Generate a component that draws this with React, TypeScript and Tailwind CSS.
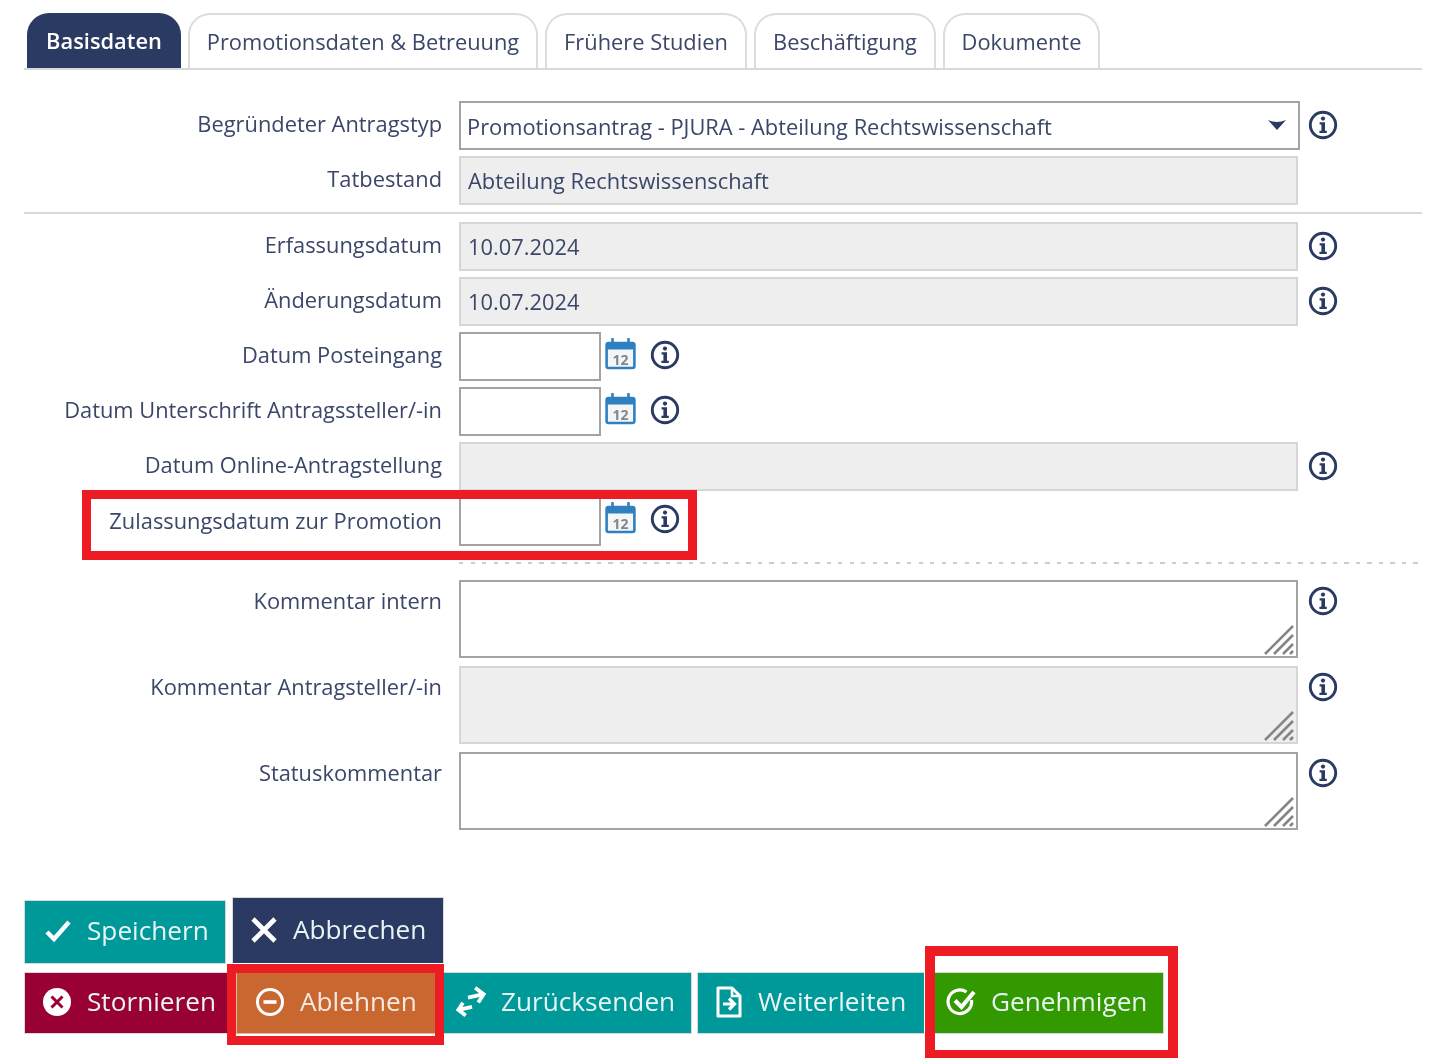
import React from "react";

const Info = ({ className = "" }: { className?: string }) => (
  <svg width="30" height="30" viewBox="0 0 30 30" className={"shrink-0 " + className}>
    <circle cx="15" cy="15" r="12.7" fill="none" stroke="#2b3a63" strokeWidth="2.9" />
    <circle cx="15" cy="8.6" r="2.1" fill="#2b3a63" />
    <path d="M11.6 12.2h5.4v8.6h1.8v2.2h-7.4v-2.2h2v-6.4h-1.8z" fill="#2b3a63" />
  </svg>
);

const Calendar = () => (
  <svg width="32" height="32" viewBox="0 0 32 32" className="shrink-0">
    <rect x="2.6" y="5" width="27.8" height="25" rx="2" fill="#f2f6f9" stroke="#2f80c0" strokeWidth="2.6" />
    <rect x="2.6" y="5" width="27.8" height="6.5" fill="#2f80c0" />
    <path d="M8.5 1v7M24.5 1v7" stroke="#2f80c0" strokeWidth="2.6" strokeLinecap="round" />
    <text x="16.5" y="26.5" textAnchor="middle" fontSize="14" fontWeight="700" fill="#858585" fontFamily="'Open Sans', sans-serif">12</text>
  </svg>
);

const Grip = () => (
  <svg width="32" height="32" viewBox="0 0 32 32" className="absolute right-[1px] bottom-[1px]">
    <path d="M2 31 30 3M11 31 30 12M20 31 30 21M27 31l3-3" stroke="#858585" strokeWidth="2.6" fill="none" />
  </svg>
);

const Label = ({ children, className = "" }: { children: React.ReactNode; className?: string }) => (
  <div className={"w-[418px] shrink-0 text-right text-[#3b4768] " + className}>{children}</div>
);

const disabled = "border-2 border-[#d6d6d6] bg-[#eeeeee]";
const active = "border-2 border-[#a3a3a3] bg-white";

const Field = ({ label, value, mt, info = true }: { label: string; value?: string; mt: string; info?: boolean }) => (
  <div className={"flex h-[49px] items-center " + mt}>
    <Label className="-mt-[2px]">{label}</Label>
    <div className={"ml-[17px] flex h-[49px] w-[839px] items-center pl-[7px] pt-[2px] text-[#3b4768] " + disabled}>{value}</div>
    {info ? <Info className="ml-[10px] -mt-[2px]" /> : null}
  </div>
);

const DateField = ({ label, mt, z }: { label: string; mt: string; z?: boolean }) => (
  <div className={"flex h-[49px] items-center " + mt}>
    <Label className={z ? "" : "-mt-[2px]"}>{label}</Label>
    <div className={"ml-[17px] h-[49px] w-[142px] " + active} />
    <div className={"ml-[3px] " + (z ? "-mt-[7px]" : "-mt-[6px]")}><Calendar /></div>
    <Info className={"ml-[14px] " + (z ? "-mt-[6px]" : "-mt-[4px]")} />
  </div>
);

const Area = ({ label, mt, off }: { label: string; mt: string; off?: boolean }) => (
  <div className={"flex h-[78px] items-start " + mt}>
    <Label className="pt-[5px]">{label}</Label>
    <div className={"relative ml-[17px] h-[78px] w-[839px] " + (off ? disabled : active)}><Grip /></div>
    <Info className="ml-[10px] mt-[6px]" />
  </div>
);

const Tab = ({ children, w, on }: { children: React.ReactNode; w: string; on?: boolean }) => (
  <div
    className={
      "flex h-[55px] items-center justify-center rounded-t-[22px] pt-[2px] " + w + " " +
      (on ? "bg-[#2b3a63] font-semibold text-white" : "border-2 border-b-0 border-[#dcdcdc] bg-white text-[#3b4768]")
    }
  >
    {children}
  </div>
);

const Btn = ({ icon, children, cls }: { icon: React.ReactNode; children: React.ReactNode; cls: string }) => (
  <div className={"flex shrink-0 items-center border border-[#d9d9d9] pb-[2px] text-[26.2px] text-[#e9f4f3] " + cls}>
    {icon}
    {children}
  </div>
);

const W = "#ffffff";

export default function App() {
  return (
    <div className="relative h-[1058px] w-[1440px] overflow-hidden bg-white pl-[24px] pt-[13px] font-['Open_Sans',sans-serif] text-[21.85px] blur-[0.75px]">
      <div className="flex w-[1398px] gap-[7px] border-b-2 border-[#d9d9d9] pl-[3px]">
        <Tab w="w-[154px]" on>Basisdaten</Tab>
        <Tab w="w-[350px]">Promotionsdaten &amp; Betreuung</Tab>
        <Tab w="w-[202px]">Frühere Studien</Tab>
        <Tab w="w-[182px]">Beschäftigung</Tab>
        <Tab w="w-[157px]">Dokumente</Tab>
      </div>

      <div className="mt-[31px] flex h-[49px] items-center">
        <Label className="-mt-[2px]">Begründeter Antragstyp</Label>
        <div className={"ml-[17px] flex h-[49px] w-[841px] items-center justify-between pl-[6px] pr-[12px] pt-[3px] text-[#3b4768] " + active}>
          <span>Promotionsantrag - PJURA - Abteilung Rechtswissenschaft</span>
          <svg width="18" height="11" viewBox="0 0 18 11" className="-mt-[5px]"><path d="M0 1 Q4.5 3 9 3 T18 1L9 11z" fill="#2b3a63" /></svg>
        </div>
        <Info className="ml-[8px] -mt-[2px]" />
      </div>
      <Field mt="mt-[6px]" label="Tatbestand" value="Abteilung Rechtswissenschaft" info={false} />
      <div className="mt-[7px] h-[2px] w-[1398px] bg-[#d9d9d9]" />
      <Field mt="mt-[8px]" label="Erfassungsdatum" value="10.07.2024" />
      <Field mt="mt-[6px]" label="Änderungsdatum" value="10.07.2024" />
      <DateField mt="mt-[6px]" label="Datum Posteingang" />
      <DateField mt="mt-[6px]" label="Datum Unterschrift Antragssteller/-in" />
      <Field mt="mt-[6px]" label="Datum Online-Antragstellung" />
      <DateField mt="mt-[6px]" label="Zulassungsdatum zur Promotion" z />
      <div className="ml-[435px] mt-[16px] h-[2px] w-[962px] bg-[repeating-linear-gradient(90deg,#cccccc_0_4px,transparent_4px_11.5px)]" />
      <Area mt="mt-[16px]" label="Kommentar intern" />
      <Area mt="mt-[8px]" label="Kommentar Antragsteller/-in" off />
      <Area mt="mt-[8px]" label="Statuskommentar" />

      <div className="mt-[67px] flex h-[67px] items-start gap-[6px]">
        <Btn cls="mt-[3px] h-[64px] w-[202px] bg-[#009999] pl-[19px]" icon={
          <svg width="28" height="28" viewBox="0 0 28 28" className="mr-[15px]"><path d="M3 15l7 7L25 5" fill="none" stroke={W} strokeWidth="4.4" /></svg>
        }>Speichern</Btn>
        <Btn cls="h-[66px] w-[212px] border-b-0 bg-[#2b3a63] pl-[17px]" icon={
          <svg width="28" height="28" viewBox="0 0 28 28" className="mr-[15px]"><path d="M3 3l22 22M25 3 3 25" fill="none" stroke={W} strokeWidth="4.6" /></svg>
        }>Abbrechen</Btn>
      </div>

      <div className="mt-[8px] flex h-[62px] items-start">
        <Btn cls="h-[62px] w-[212px] border-r-0 bg-[#990033] pl-[17px]" icon={
          <svg width="30" height="30" viewBox="0 0 30 30" className="mr-[15px]"><circle cx="15" cy="15" r="14" fill={W} /><path d="M9.5 9.5l11 11M20.5 9.5l-11 11" stroke="#990033" strokeWidth="3" /></svg>
        }>Stornieren</Btn>
        <Btn cls="h-[62px] w-[208px] border-[#e0b79f] bg-[#c96730] pl-[18px] text-[#f7e9e0]" icon={
          <svg width="30" height="30" viewBox="0 0 30 30" className="mr-[15px]"><circle cx="15" cy="15" r="12.5" fill="none" stroke={W} strokeWidth="3" /><path d="M8.5 15h13" stroke={W} strokeWidth="3.6" /></svg>
        }>Ablehnen</Btn>
        <Btn cls="h-[62px] w-[248px] border-l-0 bg-[#009999] pl-[10px]" icon={
          <svg width="34" height="34" viewBox="0 0 34 34" className="mr-[13px]"><path d="M3 22h14M9 16l-6 6 6 7M15 12h16M24 4l7 8-7 7" fill="none" stroke={W} strokeWidth="3.8" transform="rotate(-12 17 17)" /></svg>
        }>Zurücksenden</Btn>
        <Btn cls="ml-[5px] h-[62px] w-[227px] border-r-0 bg-[#009999] pl-[17px]" icon={
          <svg width="28" height="32" viewBox="0 0 28 32" className="mr-[15px]"><path d="M3 2h14l8 8v20H3z" fill="none" stroke={W} strokeWidth="3" strokeLinejoin="round" /><path d="M17 2v8h8" fill="none" stroke={W} strokeWidth="2.6" /><path d="M8 18h11M14 12.5l5.5 5.5-5.5 5.5" fill="none" stroke={W} strokeWidth="3.2" /></svg>
        }>Weiterleiten</Btn>
        <Btn cls="ml-[10px] h-[62px] w-[230px] bg-[#339900] pl-[11px]" icon={
          <svg width="32" height="32" viewBox="0 0 32 32" className="mr-[13px]"><path d="M25.5 14a11.8 11.8 0 1 1-5-8" fill="none" stroke={W} strokeWidth="3.2" /><path d="M9 14.5l6.5 6.5L28 6" fill="none" stroke={W} strokeWidth="4.2" /></svg>
        }>Genehmigen</Btn>
      </div>

      <div className="absolute left-[82px] top-[490px] h-[70px] w-[615px] border-[9px] border-[#ed1c24]" />
      <div className="absolute left-[227px] top-[964px] h-[81px] w-[217px] border-[9px] border-[#ed1c24]" />
      <div className="absolute left-[925px] top-[946px] h-[114px] w-[253px] border-[10px] border-[#ed1c24]" />
    </div>
  );
}
